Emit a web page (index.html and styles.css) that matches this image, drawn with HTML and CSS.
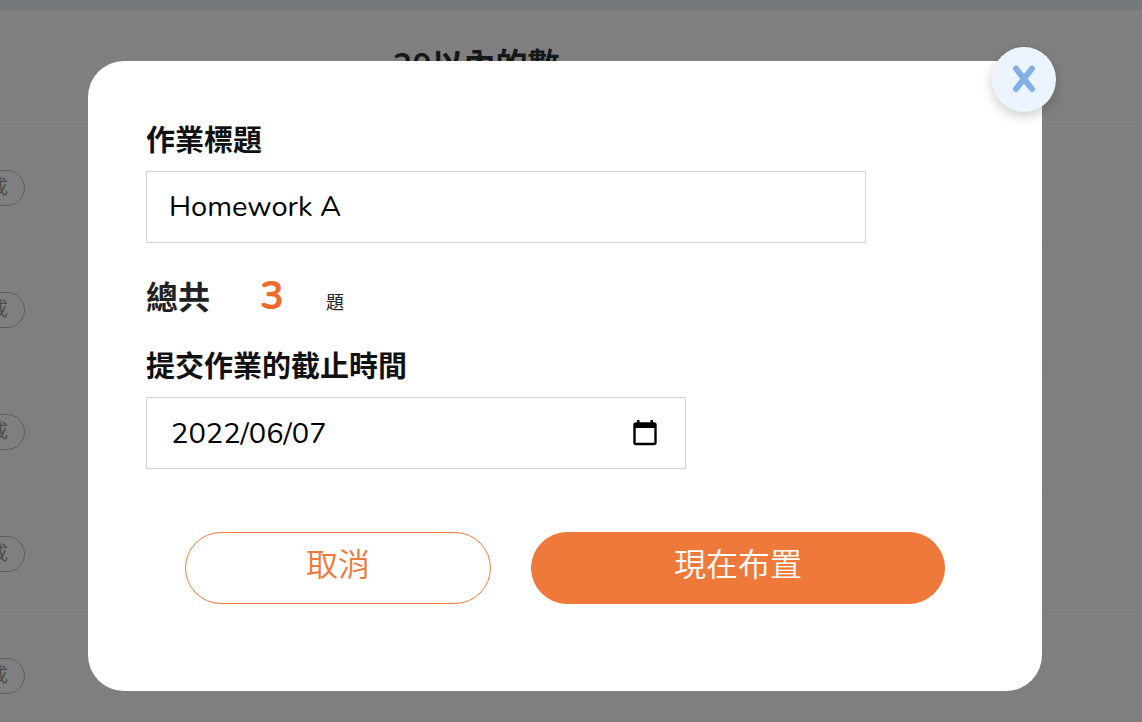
FILE: index.html
```html
<!DOCTYPE html>
<html lang="zh-Hant">
<head>
<meta charset="utf-8">
<meta name="viewport" content="width=device-width, initial-scale=1">
<title>作業</title>
<link rel="stylesheet" href="styles.css">
</head>
<body>
<main class="page">
  <header class="page-head"><h1 class="page-title">20以內的數</h1></header>
  <ul class="rows">
    <li class="row"><span class="pill">完成</span></li>
    <li class="row"><span class="pill">完成</span></li>
    <li class="row"><span class="pill">完成</span></li>
    <li class="row"><span class="pill">完成</span></li>
    <li class="row"><span class="pill">完成</span></li>
  </ul>
</main>
<div class="overlay">
  <form class="dialog" role="dialog" aria-label="作業">
    <button class="close" type="button" aria-label="關閉">
      <svg class="close-icon" viewBox="0 0 24 28" aria-hidden="true"><path d="M4 3.500L20 24M20 3.500L4 24"/></svg>
    </button>
    <label class="label" for="title">作業標題</label>
    <input class="field" id="title" type="text" value="Homework A">
    <p class="total"><span class="total-label">總共</span><span class="total-count">3</span><span class="total-unit">題</span></p>
    <label class="label" for="due">提交作業的截止時間</label>
    <div class="date">
      <input class="date-input" id="due" type="text" value="2022/06/07">
      <button class="date-button" type="button" aria-label="選擇日期">
        <svg class="date-icon" viewBox="0 0 24 26" aria-hidden="true"><rect x="1.500" y="3.500" width="21" height="20.500" rx="1.500" fill="none" stroke="#000" stroke-width="2.400"/><path d="M1 3H23V8H1ZM4 0H6.500V4H4ZM17.500 0H20V4H17.500Z"/></svg>
      </button>
    </div>
    <div class="actions">
      <button class="button button-cancel" type="button">取消</button>
      <button class="button button-submit" type="submit">現在布置</button>
    </div>
  </form>
</div>
</body>
</html>
```
FILE: styles.css
```css
* { box-sizing: border-box; }
body {
  margin: 0;
  height: 100vh;
  overflow: hidden;
  background: #fff;
  color: #111;
  font-family: Nunito, Lato, "Noto Sans CJK TC", sans-serif;
}
button, input { font: inherit; }
.page { border-top: 10px solid #e8f2fa; }
.page-head {
  height: 115px;
  padding: 32px 0 0 393px;
  border-bottom: 2px solid #fbfbfb;
}
.page-title { margin: 0; font-size: 32px; line-height: 48px; color: #2c2f33; }
.rows { margin: 0; padding: 0; list-style: none; }
.row {
  display: flex;
  align-items: center;
  height: 122px;
  padding-top: 6px;
  border-bottom: 2px solid #fbfbfb;
}
.pill {
  height: 36px;
  margin-left: -49px;
  padding: 0 16px 0 18px;
  border: 1px solid #bbb;
  border-radius: 18px;
  font-size: 19px;
  line-height: 34px;
  color: #999;
}
.overlay {
  position: fixed;
  inset: 0;
  padding: 61px 100px 31px 88px;
  overflow: auto;
  background: rgba(0, 0, 0, .5);
}
.dialog {
  position: relative;
  padding: 61px 58px 87px;
  border-radius: 36px;
  background: #fff;
}
.close {
  position: absolute;
  top: -14px;
  right: -14px;
  display: grid;
  place-items: center;
  width: 64px;
  height: 65px;
  padding: 0 0 2px;
  border: 0;
  border-radius: 50%;
  background: #ecf5ff;
  box-shadow: 0 4px 12px rgba(0, 0, 0, .2);
}
.close-icon {
  width: 24px;
  height: 28px;
  fill: none;
  stroke: #84afe6;
  stroke-width: 6;
  stroke-linecap: round;
}
.label {
  display: block;
  margin-bottom: 9px;
  font-size: 29px;
  font-weight: 700;
  line-height: 40px;
}
.field, .date {
  width: 100%;
  height: 72px;
  border: 1px solid #d2d2d2;
  background: #fff;
  color: #000;
  font-size: 29px;
}
.field { display: block; max-width: 720px; padding: 0 22px 2px; }
.date {
  display: flex;
  align-items: center;
  max-width: 540px;
  padding: 0 28px 0 24px;
}
.date-input {
  flex: 1;
  min-width: 0;
  padding: 0;
  border: 0;
  background: none;
  color: #000;
}
.date-button { display: flex; padding: 0; border: 0; background: none; }
.date-icon { width: 24px; height: 26px; }
.total {
  display: flex;
  align-items: baseline;
  margin: 23px 0 15px;
  line-height: 60px;
}
.total-label { width: 114px; font-size: 32px; font-weight: 700; color: #222; }
.total-count { width: 66px; font-size: 40px; font-weight: 700; color: #ee6a2d; }
.total-unit { font-size: 18px; color: #222; }
.actions {
  display: grid;
  grid-template-columns: 306fr 414fr;
  gap: 40px;
  margin-top: 63px;
  padding: 0 39px;
}
.button {
  height: 72px;
  padding: 0 0 12px;
  border: 1px solid #ef793b;
  border-radius: 36px;
  font-family: "Noto Sans CJK TC", sans-serif;
  font-size: 32px;
  font-weight: 350;
}
.button-cancel { background: #fff; color: #ef793b; }
.button-submit { background: #ef793b; color: #fff; }
```
